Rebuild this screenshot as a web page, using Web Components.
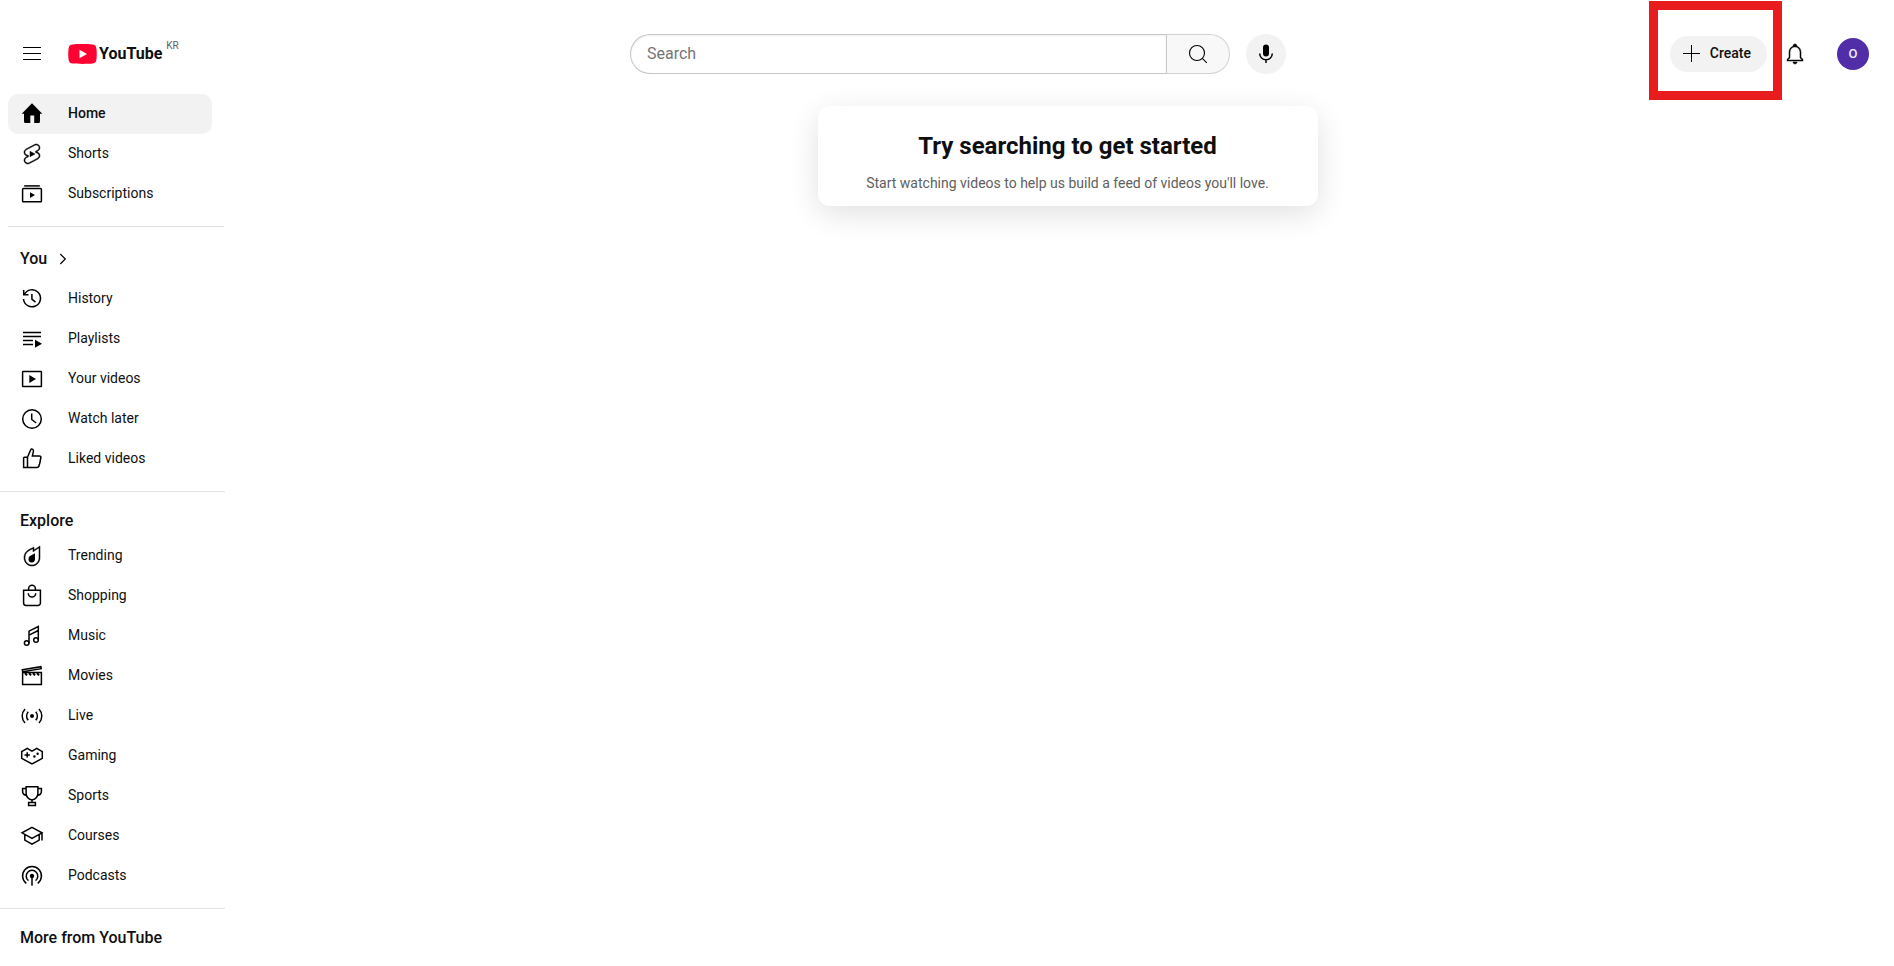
<!DOCTYPE html>
<html lang="en">
<head>
<meta charset="utf-8">
<meta name="viewport" content="width=device-width, initial-scale=1">
<title>YouTube</title>
<style>
  body {
    margin: 0;
    min-height: 100vh;
    background: #fff;
    color: #0f0f0f;
    font: 14px/20px Roboto, "Noto Sans", sans-serif;
  }
</style>
</head>
<body>
<app-shell>
  <app-header slot="header"></app-header>

  <nav-section slot="nav" inset>
    <nav-item icon="home" active>Home</nav-item>
    <nav-item icon="shorts">Shorts</nav-item>
    <nav-item icon="subscriptions">Subscriptions</nav-item>
  </nav-section>
  <nav-section slot="nav">
    <nav-title link>You</nav-title>
    <nav-item icon="history">History</nav-item>
    <nav-item icon="playlists">Playlists</nav-item>
    <nav-item icon="videos">Your videos</nav-item>
    <nav-item icon="later">Watch later</nav-item>
    <nav-item icon="like">Liked videos</nav-item>
  </nav-section>
  <nav-section slot="nav">
    <nav-title>Explore</nav-title>
    <nav-item icon="trending">Trending</nav-item>
    <nav-item icon="shopping">Shopping</nav-item>
    <nav-item icon="music">Music</nav-item>
    <nav-item icon="movies">Movies</nav-item>
    <nav-item icon="live">Live</nav-item>
    <nav-item icon="gaming">Gaming</nav-item>
    <nav-item icon="sports">Sports</nav-item>
    <nav-item icon="courses">Courses</nav-item>
    <nav-item icon="podcasts">Podcasts</nav-item>
  </nav-section>
  <nav-section slot="nav" last>
    <nav-title>More from YouTube</nav-title>
  </nav-section>

  <feed-nudge>
    <span slot="title">Try searching to get started</span>
    Start watching videos to help us build a feed of videos you'll love.
  </feed-nudge>
</app-shell>

<template id="app-shell">
  <style>
    :host { display: block; }
    .body { display: grid; grid-template-columns: 225px minmax(0, 1fr); }
    nav { padding-top: 12px; }
    main { display: flex; justify-content: center; align-items: flex-start; padding: 24px 8px 24px 24px; }
  </style>
  <slot name="header"></slot>
  <div class="body">
    <nav aria-label="Guide"><slot name="nav"></slot></nav>
    <main><slot></slot></main>
  </div>
</template>

<template id="app-header">
  <style>
    :host { display: block; padding-top: 26px; }
    header {
      display: grid;
      grid-template-columns: minmax(0, 1fr) minmax(0, 683px) minmax(0, 1fr);
      align-items: center;
      height: 56px;
      padding: 0 25px 0 20px;
    }
    .start, .end { display: flex; align-items: center; }
    .start { gap: 24px; }
    .end { justify-content: flex-end; }
    button {
      display: flex;
      align-items: center;
      justify-content: center;
      padding: 0;
      border: 0;
      background: none;
      color: inherit;
      font: inherit;
      cursor: pointer;
    }
    .bell { width: 40px; height: 40px; margin: 0 22px 0 8px; }
    .avatar {
      width: 32px;
      height: 32px;
      border-radius: 50%;
      background: #512da8;
      color: #f1edf8;
      font-size: 13px;
      font-weight: 500;
    }
    .create {
      gap: 6px;
      height: 36px;
      padding: 0 16px 0 10px;
      border-radius: 18px;
      background: #f2f2f2;
      font-weight: 500;
    }
    .create span { padding-bottom: 2px; }
  </style>
  <header>
    <div class="start">
      <button aria-label="Guide"><app-icon name="menu"></app-icon></button>
      <app-logo region="KR"></app-logo>
    </div>
    <search-bar></search-bar>
    <div class="end">
      <highlight-frame>
        <button class="create"><app-icon name="plus"></app-icon><span>Create</span></button>
      </highlight-frame>
      <button class="bell" aria-label="Notifications"><app-icon name="bell"></app-icon></button>
      <button class="avatar">O</button>
    </div>
  </header>
</template>

<template id="app-logo">
  <style>
    :host { display: block; }
    a { display: flex; align-items: center; gap: 2px; color: inherit; text-decoration: none; }
    svg { display: block; width: 29px; height: 20px; }
    .word { font: bold 16px/26px Roboto, sans-serif; }
    .region { align-self: flex-start; padding-left: 2px; color: #606060; font-size: 10px; line-height: 10px; }
  </style>
  <a href="#">
    <svg viewBox="0 0 29 20" aria-hidden="true">
      <path fill="#f03" d="M4.600.4C9 0 20 0 24.400.4c2.400.200 3.700 1.500 4 3.800.5 3.800.5 7.800 0 11.600-.3 2.300-1.600 3.600-4 3.800-4.400.5-15.400.5-19.800 0-2.400-.2-3.700-1.500-4-3.800-.5-3.800-.5-7.800 0-11.600C.9 1.900 2.200.6 4.600.4z"/>
      <path fill="#fff" d="M11.500 5.700v8.600l7.500-4.300z"/>
    </svg>
    <span class="word">YouTube</span>
    <span class="region"></span>
  </a>
</template>

<template id="search-bar">
  <style>
    :host { display: flex; gap: 16px; padding-left: 27px; }
    form { display: flex; flex: 1; min-width: 0; }
    input {
      flex: 1;
      min-width: 0;
      height: 40px;
      box-sizing: border-box;
      padding: 0 4px 2px 16px;
      border: 1px solid #c6c6c6;
      border-right: 0;
      border-radius: 20px 0 0 20px;
      box-shadow: inset 0 1px 2px #eee;
      background: #fff;
      color: #0f0f0f;
      font: 16px/24px Roboto, sans-serif;
      outline: 0;
    }
    input::placeholder { color: #757575; }
    button {
      display: flex;
      align-items: center;
      justify-content: center;
      height: 40px;
      box-sizing: border-box;
      padding: 0;
      color: inherit;
      cursor: pointer;
    }
    .go {
      width: 64px;
      border: 1px solid #d3d3d3;
      border-left-color: #c6c6c6;
      border-radius: 0 20px 20px 0;
      background: #f8f8f8;
    }
    .mic { width: 40px; border: 0; border-radius: 50%; background: #f2f2f2; }
  </style>
  <form role="search">
    <input type="text" placeholder="Search" aria-label="Search">
    <button class="go" type="button" aria-label="Search"><app-icon name="search"></app-icon></button>
  </form>
  <button class="mic" aria-label="Search with your voice"><app-icon name="mic"></app-icon></button>
</template>

<template id="highlight-frame">
  <style>
    :host { display: block; position: relative; }
    .frame {
      position: absolute;
      inset: -35px -15px -28px -21px;
      border: 9px solid #e81c1c;
      pointer-events: none;
    }
  </style>
  <slot></slot>
  <div class="frame"></div>
</template>

<template id="nav-section">
  <style>
    :host { display: block; padding-bottom: 12px; margin-bottom: 12px; border-bottom: 1px solid #e2e2e2; }
    :host([inset]) { margin-left: 8px; margin-right: 1px; --item-margin: 0 12px 0 0; }
    :host([last]) { border: 0; margin: 0; padding: 0; }
  </style>
  <slot></slot>
</template>

<template id="nav-title">
  <style>
    :host { display: block; padding: 0 20px; }
    h3 { margin: 0; padding-top: 2px; font-size: 16px; font-weight: 500; line-height: 30px; }
    :host([link]) h3 { padding: 0; }
    a { display: flex; align-items: center; gap: 4px; color: inherit; text-decoration: none; line-height: 40px; }
  </style>
  <h3><slot></slot></h3>
</template>

<template id="nav-item">
  <style>
    :host { display: block; margin: var(--item-margin, 0 13px 0 8px); }
    a {
      display: flex;
      align-items: center;
      gap: 24px;
      height: 40px;
      padding: 0 12px;
      border-radius: 10px;
      color: inherit;
      text-decoration: none;
    }
    span { padding-bottom: 2px; }
    :host([active]) a { background: #f2f2f2; font-weight: 500; }
  </style>
  <a href="#"><app-icon></app-icon><span><slot></slot></span></a>
</template>

<template id="feed-nudge">
  <style>
    :host {
      display: block;
      flex: 0 1 500px;
      box-sizing: border-box;
      padding: 24px 16px 12px;
      border-radius: 12px;
      box-shadow: 0 8px 30px rgba(0, 0, 0, .12);
      text-align: center;
    }
    h2 { margin: 0 0 10px; font-size: 24px; line-height: 32px; font-weight: 700; }
    p { margin: 0; color: #606060; line-height: 22px; }
  </style>
  <h2><slot name="title"></slot></h2>
  <p><slot></slot></p>
</template>

<script>
  // 24x24 line icons; f = filled part, k = filled part with a thin edge
  const ICONS = {
    menu: '<path class="f" d="M21 6H3V5h18v1zm0 6H3v-1h18v1zm0 6H3v-1h18v1z"/>',
    plus: '<path class="f" d="M20 12h-8v8h-1v-8H3v-1h8V3h1v8h8v1z"/>',
    bell: '<path class="f k" d="M10 20h4c0 1.100-.9 2-2 2s-2-.9-2-2zm10-2.650V19H4v-1.650l2-1.880v-5.150C6 7.400 7.560 5.100 10 4.340v-.380c0-1.420 1.490-2.500 2.990-1.760.65.320 1.010 1.030 1.010 1.760v.39c2.440.75 4 3.060 4 5.980v5.150l2 1.870zm-1 .42-2-1.880v-5.470c0-2.470-1.190-4.360-3.130-5.100-1.260-.53-2.640-.5-3.840.03C8.150 6.110 7 7.990 7 10.420v5.470l-2 1.880V18h14v-.23z"/>',
    search: '<g stroke-width="1.1"><circle cx="11" cy="11" r="7.500"/><path d="M16.300 16.300l4.500 4.500"/></g>',
    mic: '<rect class="f" x="9" y="2.500" width="6" height="12" rx="3"/><path d="M5.700 11.500a6.300 6.300 0 0 0 12.600 0M12 17.800V21"/>',
    home: '<path class="f" d="M12 1.200 22.300 11.700H20v7.800a1.500 1.500 0 0 1-1.500 1.500H14.200v-7.500h-3.900V21H5.500A1.500 1.500 0 0 1 4 19.500v-7.800H1.700z"/>',
    shorts: '<path class="f k" d="M10 14.650v-5.300L15 12l-5 2.650zm7.770-4.330-1.200-.5L18 9.060c1.840-.96 2.530-3.230 1.560-5.060s-3.240-2.530-5.070-1.560L6 6.940c-1.290.68-2.070 2.040-2 3.490.07 1.420.93 2.670 2.220 3.250.03.01 1.200.5 1.200.5L6 14.930c-1.830.97-2.530 3.240-1.560 5.070.97 1.830 3.240 2.530 5.070 1.560l8.500-4.500c1.290-.68 2.060-2.040 1.990-3.490-.07-1.420-.94-2.680-2.230-3.250zm-.23 5.860-8.500 4.500c-1.340.71-3.010.2-3.720-1.140-.71-1.340-.2-3.010 1.140-3.720l2.040-1.080v-1.210l-.69-.28-1.110-.46c-.99-.41-1.650-1.350-1.700-2.410-.05-1.060.52-2.060 1.460-2.560l8.500-4.500c1.340-.71 3.010-.2 3.720 1.140.71 1.340.2 3.010-1.140 3.720L15.500 9.260v1.210l1.800.74c.99.41 1.650 1.350 1.700 2.410.05 1.060-.52 2.060-1.460 2.560z"/>',
    subscriptions: '<path d="M4.200 3.900h15.600"/><rect x="2.600" y="6.600" width="18.800" height="13.200" rx=".8"/><path class="f" d="M10 10.200v5.800l5-2.900z"/>',
    history: '<path d="M3.700 3v4.800h4.800M4.300 7.600A8.500 8.500 0 1 1 3.500 12M11.900 7v5.200l3.600 3"/>',
    playlists: '<path d="M3 5.500h18M3 9.500h18M3 13.500h10M3 17.500h10"/><path class="f" d="M15 12.800v8l7-4z"/>',
    videos: '<rect x="2.600" y="4.600" width="18.800" height="14.800" rx=".5"/><path class="f" d="M9.300 8v8l6.700-4z"/>',
    later: '<circle cx="12" cy="12" r="9.300"/><path d="M11.700 6.500v6l4.500 3.500"/>',
    like: '<path d="M7.500 10.300H4.400a.8.8 0 0 0-.8.8v9.500h3.900zM7.500 10.300l3.200-7.600c.5-1.300 3.200-.8 2.700 1.600l-1 4.600h6.800c1.300 0 2 1 1.700 2.200l-.7 2.200c.3.900 0 1.700-.4 2.200.2.900-.1 1.600-.6 2.100 0 1.900-.6 3-2.500 3H7.500"/>',
    trending: '<path class="f k" d="M19 3.870v9.770C19 17.700 15.860 21 12 21s-7-3.300-7-7.370v-.13c0-1.060.22-2.130.62-3.090.5-1.190 1.290-2.210 2.270-2.970.85-.66 1.830-1.140 2.870-1.650.39-.19.77-.38 1.150-.58.36-.19.72-.38 1.080-.56v3.220l1.550-1.040L19 3.870M20 2l-6 4V3c-.85.44-1.700.88-2.550 1.330-1.410.74-2.900 1.340-4.170 2.320-1.130.87-2.020 2.050-2.580 3.370-.46 1.090-.7 2.290-.7 3.480v.14C4 18.260 7.580 22 12 22s8-3.740 8-8.360V2z"/><path class="f" d="M10 11.900 15 9.300v5.400a3.200 3.600 0 0 1-6.500.2c0-1.200.6-2.300 1.500-3z"/>',
    shopping: '<path d="M3.600 6.200h16.800V19a2.400 2.400 0 0 1-2.400 2.400H6A2.400 2.400 0 0 1 3.600 19zM8.600 6V4.700a3.400 3.400 0 0 1 6.800 0V6M8.300 9.300a3.700 3.700 0 0 0 7.400 0"/>',
    music: '<circle cx="6.700" cy="19" r="2.300"/><circle cx="16" cy="16" r="2.300"/><path d="M9 19V7.200l9.300-4.700V16M9 11.200l9.300-4.700"/>',
    movies: '<path d="M2.600 8.600h18.800v11.800H2.600zM2.300 5.700l18.600-3 .3 2-18.600 3z"/><path d="M5 9l2 2.400M9 9l2 2.400M13 9l2 2.400M17 9l2 2.400" stroke-width="2"/>',
    live: '<circle class="f" cx="12" cy="12" r="2"/><path d="M8.300 7.800a6 6 0 0 0 0 8.400M15.700 7.800a6 6 0 0 1 0 8.400M5 4.900a10.400 10.400 0 0 0 0 14.200M19 4.900a10.400 10.400 0 0 1 0 14.200"/>',
    gaming: '<path d="M1.700 7.600 7.200 4.400 12 7.200l4.800-2.800 5.500 3.200v6.800L12 20 1.700 14.400zM7.200 8.200v5.400M4.500 10.900h5.400"/><circle class="f" cx="17.600" cy="9.800" r="1.200"/><circle class="f" cx="14.400" cy="12.500" r="1.200"/>',
    sports: '<path d="M6.100 2.700h11.800v6.500c0 3.300-2.300 5.800-5.900 6.800-3.600-1-5.900-3.500-5.900-6.800zM6 4.600H2.600v2.600c0 2.400 1.700 3.900 4 4M18 4.600h3.400v2.600c0 2.400-1.700 3.900-4 4M12 16v2.300M8.600 18.400h6.800v3H8.600z"/>',
    courses: '<path d="M12 3.300 22 8.800 12 14.500 2 8.800zM4.800 10.500v5.600l7.200 4 7.200-4v-5.600M22 8.800v7.800"/>',
    podcasts: '<circle class="f" cx="12" cy="12" r="2.200"/><path d="M12 12v9.800M8.500 16.700a5.800 5.800 0 1 1 7 0M6.300 19.400a9.400 9.400 0 1 1 11.400 0"/>',
    chevron: '<path d="M9.300 7l5 5-5 5" stroke-width="1.200"/>'
  };

  // Clones the template that has the tag's own name
  class TemplateElement extends HTMLElement {
    constructor() {
      super();
      const template = document.getElementById(this.localName);
      this.attachShadow({ mode: 'open' }).appendChild(template.content.cloneNode(true));
    }
  }

  class AppIcon extends HTMLElement {
    static get observedAttributes() { return ['name']; }

    constructor() {
      super();
      this.attachShadow({ mode: 'open' });
    }

    attributeChangedCallback() {
      this.shadowRoot.innerHTML = `
        <style>
          :host { display: block; flex: none; width: 24px; height: 24px; color: #000; }
          svg { display: block; width: 100%; height: 100%; fill: none; stroke: currentColor; stroke-width: 1.5; }
          .f { fill: currentColor; stroke: none; }
          .k { stroke: currentColor; stroke-width: .5; }
        </style>
        <svg viewBox="0 0 24 24" aria-hidden="true">${ICONS[this.getAttribute('name')] || ''}</svg>`;
    }
  }

  class AppLogo extends TemplateElement {
    connectedCallback() {
      this.shadowRoot.querySelector('.region').textContent = this.getAttribute('region');
    }
  }

  class NavItem extends TemplateElement {
    connectedCallback() {
      this.shadowRoot.querySelector('app-icon').setAttribute('name', this.getAttribute('icon'));
      if (this.hasAttribute('active')) {
        this.shadowRoot.querySelector('a').setAttribute('aria-current', 'page');
      }
    }
  }

  class NavTitle extends TemplateElement {
    connectedCallback() {
      if (this.hasAttribute('link')) {
        this.shadowRoot.querySelector('h3').innerHTML =
          '<a href="#"><slot></slot><app-icon name="chevron"></app-icon></a>';
      }
    }
  }

  customElements.define('app-icon', AppIcon);
  customElements.define('app-logo', AppLogo);
  customElements.define('nav-item', NavItem);
  customElements.define('nav-title', NavTitle);
  ['search-bar', 'highlight-frame', 'nav-section', 'feed-nudge', 'app-header', 'app-shell'].forEach((tag) => {
    customElements.define(tag, class extends TemplateElement {});
  });
</script>
</body>
</html>
